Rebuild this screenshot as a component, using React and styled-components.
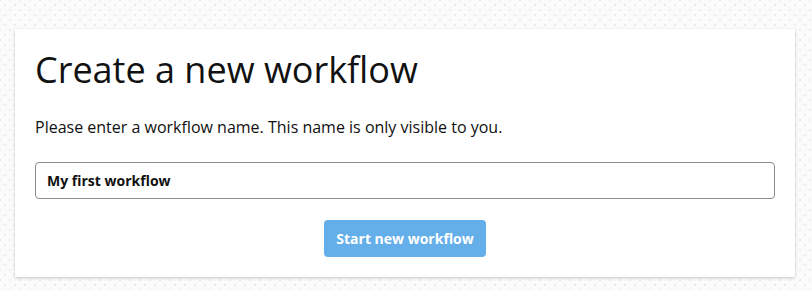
import React, { useState } from "react";
import styled, { createGlobalStyle } from "styled-components";

const GlobalStyle = createGlobalStyle`
  html, body {
    margin: 0;
    padding: 0;
  }
  body {
    font-family: "Open Sans", "Noto Sans", sans-serif;
    color: #111;
    background-color: #fbfbfb;
    background-image:
      radial-gradient(#ececec 0.8px, transparent 1px),
      radial-gradient(#ececec 0.8px, transparent 1px);
    background-size: 10px 10px;
    background-position: 0 0, 5px 5px;
  }
`;

const Page = styled.div`
  padding: 29px 17px 12px 15px;
`;

const Card = styled.div`
  background: #fff;
  box-shadow: 0 1px 3px rgba(0, 0, 0, 0.22);
  padding: 19px 20px 20px 20px;
  display: flex;
  flex-direction: column;
`;

const Title = styled.h1`
  margin: 0;
  font-size: 36px;
  font-weight: 400;
  line-height: 1.2;
  color: #111;
`;

const Intro = styled.p`
  margin: 24px 0 23px;
  font-size: 16px;
  line-height: 24px;
  color: #111;
`;

const NameInput = styled.input`
  box-sizing: border-box;
  width: 100%;
  height: 37px;
  padding: 0 11px;
  border: 1px solid #8c8c8c;
  border-radius: 4px;
  font-family: inherit;
  font-size: 14px;
  font-weight: 700;
  color: #111;
  outline: none;
`;

const Actions = styled.div`
  display: flex;
  justify-content: center;
  margin-top: 21px;
`;

const PrimaryButton = styled.button`
  height: 37px;
  padding: 0 12px;
  border: none;
  border-radius: 4px;
  background: #64aee9;
  color: #fff;
  font-family: inherit;
  font-size: 14px;
  font-weight: 700;
  cursor: pointer;
`;

export default function App() {
  const [name, setName] = useState("My first workflow");

  return (
    <>
      <GlobalStyle />
      <Page>
        <Card>
          <Title>Create a new workflow</Title>
          <Intro>
            Please enter a workflow name. This name is only visible to you.
          </Intro>
          <NameInput value={name} onChange={(e) => setName(e.target.value)} />
          <Actions>
            <PrimaryButton>Start new workflow</PrimaryButton>
          </Actions>
        </Card>
      </Page>
    </>
  );
}
